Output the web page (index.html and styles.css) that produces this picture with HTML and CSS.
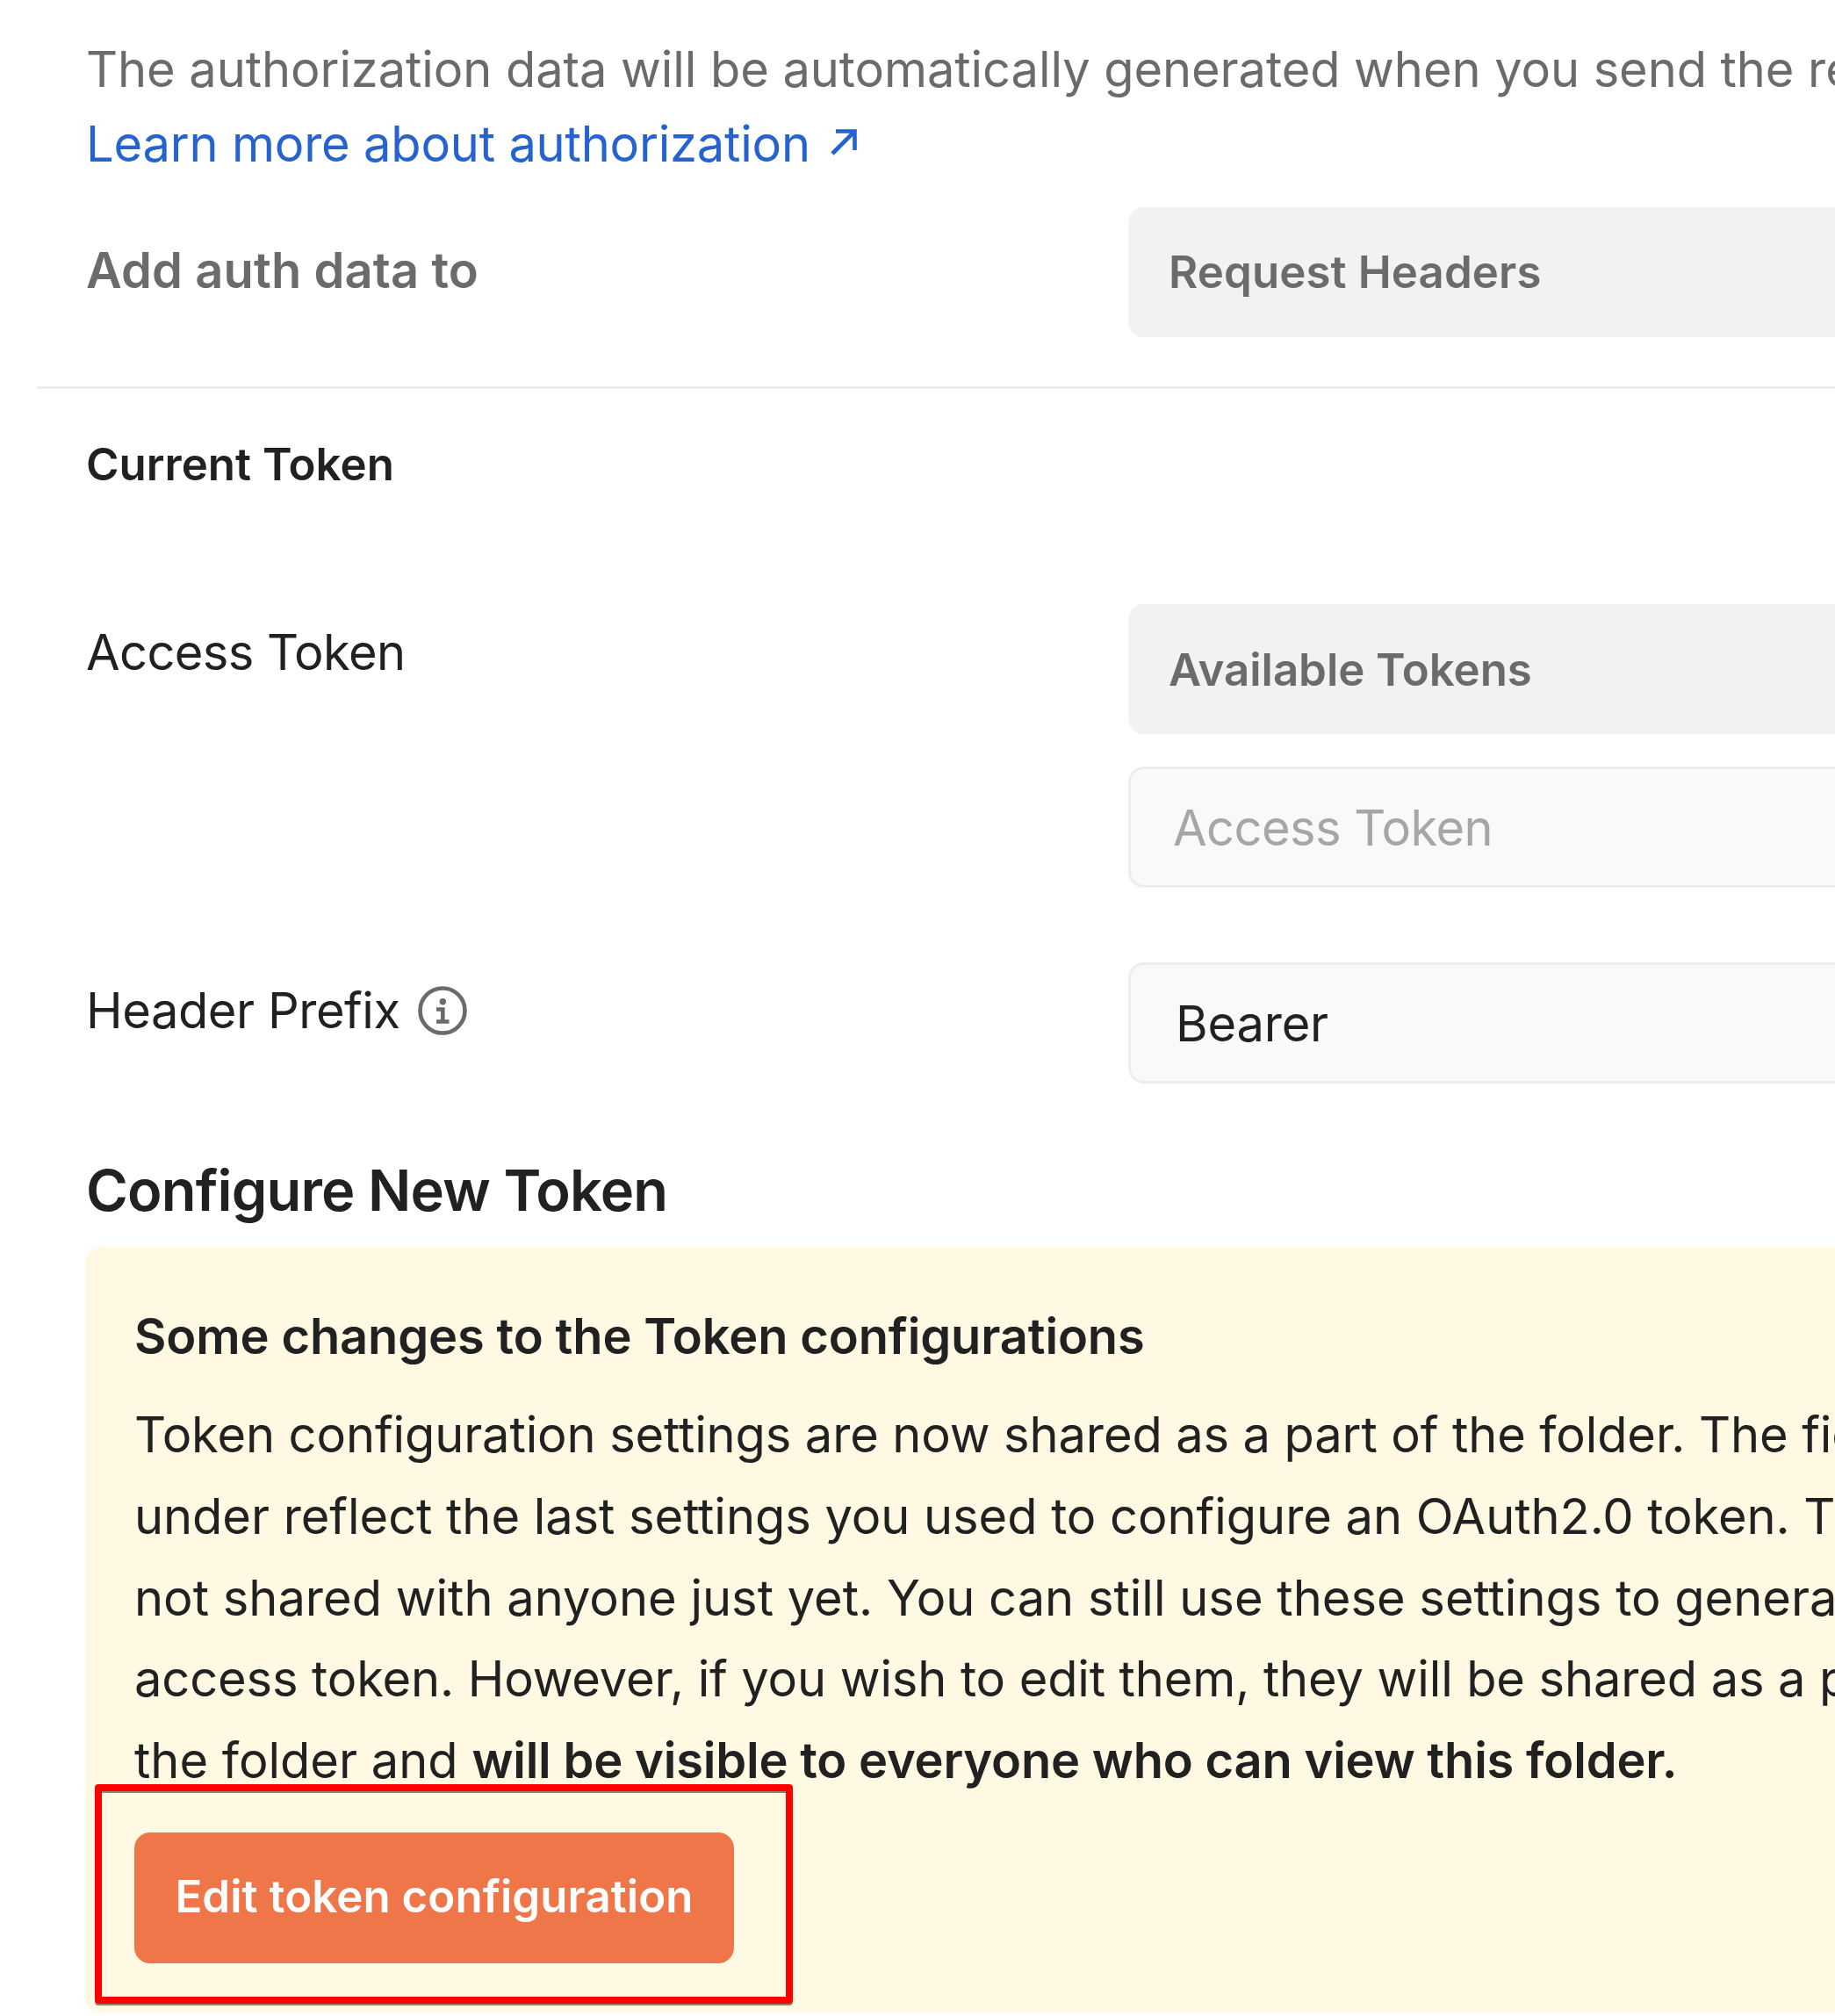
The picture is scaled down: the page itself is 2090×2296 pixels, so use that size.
FILE: index.html
```html
<!DOCTYPE html>
<html lang="en">
<head>
<meta charset="utf-8">
<title>Authorization</title>
<link rel="stylesheet" href="styles.css">
</head>
<body>
<main class="panel">
  <section class="intro">
    <p class="intro-text">The authorization data will be automatically generated when you send the request.</p>
    <a class="learn-more" href="#">Learn more about authorization
      <svg class="arrow" viewBox="0 0 32 32" aria-hidden="true"><path d="M7 3.500H28.500V25M28.500 3.500L3 29" fill="none" stroke="currentColor" stroke-width="4.600"/></svg>
    </a>
  </section>
  <div class="row row-add">
    <span class="label label-strong">Add auth data to</span>
    <div class="select">Request Headers</div>
  </div>
  <hr class="divider">
  <h3 class="current">Current Token</h3>
  <div class="row row-access">
    <span class="label label-token">Access Token</span>
    <div class="fields">
      <div class="select select-tokens">Available Tokens</div>
      <div class="input placeholder">Access Token</div>
    </div>
  </div>
  <div class="row row-prefix">
    <span class="label">Header Prefix
      <svg class="info" viewBox="0 0 56 56" aria-hidden="true"><circle cx="28" cy="28" r="25.500" fill="none" stroke="currentColor" stroke-width="4.600"/><circle cx="28.300" cy="17.800" r="3.700" fill="currentColor"/><path d="M21 26.500H28.300V40.500M21 40.500H35.500" fill="none" stroke="currentColor" stroke-width="4.600"/></svg>
    </span>
    <div class="input value">Bearer</div>
  </div>
  <h2 class="configure">Configure New Token</h2>
  <section class="notice">
    <h3 class="notice-title">Some changes to the Token configurations</h3>
    <p class="notice-body"><span class="line tight">Token configuration settings are now shared as a part of the folder. The fields</span> <span class="line snug">under reflect the last settings you used to configure an OAuth2.0 token. These are</span> <span class="line">not shared with anyone just yet. You can still use these settings to generate an</span> <span class="line tight">access token. However, if you wish to edit them, they will be shared as a part of</span> <span class="line">the folder and <strong>will be visible to everyone who can view this folder.</strong></span></p>
    <button class="edit">Edit token configuration</button>
    <div class="highlight"></div>
  </section>
</main>
</body>
</html>
```
FILE: styles.css
```css
* { box-sizing: border-box; }
body { margin: 0; background: #fff; overflow: hidden; }
.panel {
  width: 2090px; height: 2296px; overflow: hidden;
  display: flex; flex-direction: column;
  font-family: Inter, "Liberation Sans", sans-serif;
  font-size: 56px; color: #212121; white-space: nowrap;
}
h2, h3, p { margin: 0; }
.intro { padding: 37px 0 0 98px; height: 236px; line-height: 85px; color: #6b6b6b; }
.intro-text { letter-spacing: -0.08px; }
.learn-more {
  color: #2563cf; text-decoration: none; letter-spacing: -0.2px;
  display: flex; align-items: center; gap: 22px;
}
.arrow { width: 32px; height: 32px; margin-top: -5px; }
.row { display: grid; grid-template-columns: 1187px 1fr; padding-left: 98px; align-items: start; }
.label { line-height: 68px; display: flex; align-items: center; gap: 20px; letter-spacing: -0.45px; }
.label-token { letter-spacing: -0.6px; }
.label-strong { font-weight: 600; color: #6b6b6b; padding-top: 38px; letter-spacing: 0.1px; }
.select {
  height: 148px; line-height: 148px; padding-left: 46px; margin-right: -40px;
  border-radius: 18px; background: #f2f2f2; color: #6b6b6b;
  font-size: 51px; font-weight: 600; letter-spacing: 0.1px;
}
.select-tokens { line-height: 150px; letter-spacing: -0.05px; }
.input {
  height: 138px; line-height: 134px; padding-left: 50px; margin-right: -40px;
  border: 3px solid #ededed; border-radius: 18px; background: #f9f9f9;
}
.placeholder { color: #a6a6a6; padding-left: 48px; letter-spacing: -0.55px; }
.value { padding-left: 51px; letter-spacing: -0.2px; }
.divider { width: 2048px; height: 3px; margin: 56px 0 0 42px; border: 0; background: #ededed; }
.current { padding-left: 98px; margin-top: 51px; font-size: 51px; line-height: 70px; font-weight: 600; }
.row-access { margin-top: 124px; }
.row-access .label { padding-top: 21px; }
.fields { display: flex; flex-direction: column; gap: 37px; }
.row-prefix { margin-top: 85px; }
.row-prefix .label { padding-top: 21px; }
.info { width: 56px; height: 56px; color: #6b6b6b; }
.configure {
  padding-left: 98px; margin-top: 83px; font-size: 65px; line-height: 78px;
  font-weight: 600; letter-spacing: -0.85px;
}
.notice {
  position: relative; margin-top: 25px; margin-left: 97px; margin-right: -40px; height: 872px;
  padding: 66px 0 0 56px; background: #fff8e2; border-radius: 18px;
}
.notice-title { font-size: 56px; line-height: 72px; font-weight: 600; letter-spacing: -0.15px; }
.notice-body { margin-top: 30px; line-height: 92.8px; }
.line { display: block; }
.tight { letter-spacing: -0.12px; }
.snug { letter-spacing: -0.05px; }
strong { font-weight: 600; letter-spacing: -0.2px; }
.edit {
  display: block; width: 683px; height: 149px; margin-top: 35px; padding: 0 0 4px;
  border: 0; border-radius: 18px; background: #ef7648; color: #fff;
  font: 600 51px/145px Inter, "Liberation Sans", sans-serif; letter-spacing: 0.06px;
}
.highlight {
  position: absolute; left: 11px; top: 612px; width: 795px; height: 250px;
  border: 8px solid #f00; border-radius: 4px;
  box-shadow: 0 2px 0 #8c806f, inset 0 2px 0 #8c8670;
}
```
